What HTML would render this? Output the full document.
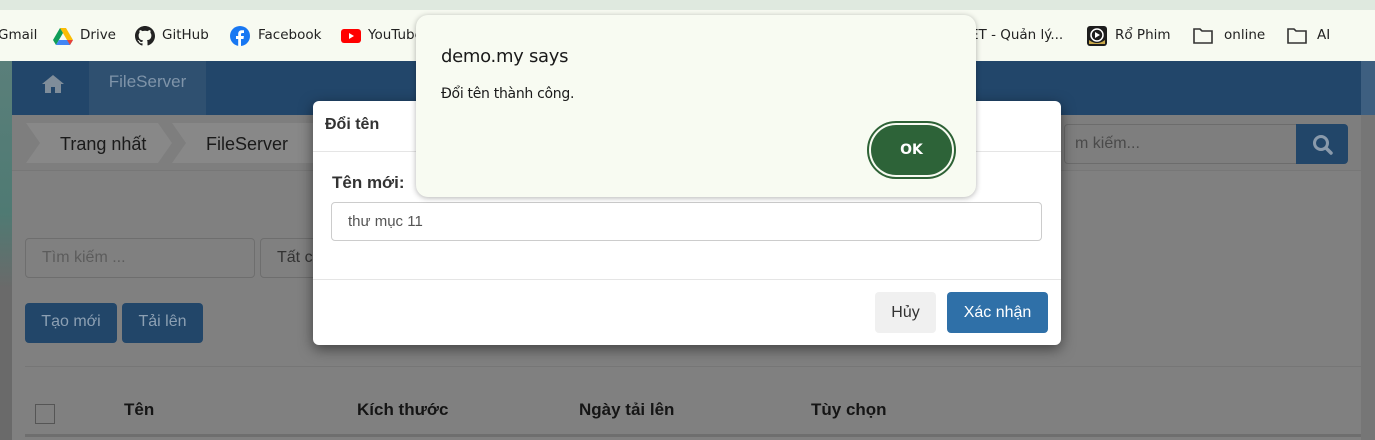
<!DOCTYPE html>
<html><head><meta charset="utf-8"><style>
*{box-sizing:border-box;margin:0;padding:0}
body{width:1375px;height:440px;overflow:hidden;position:relative;font-family:"Liberation Sans",sans-serif;background:#808080}
.abs{position:absolute}
.top{left:0;top:0;width:1375px;height:10px;background:#dfe9df}
.bm{left:0;top:10px;width:1375px;height:51px;background:#f7faf1;font-family:"DejaVu Sans","Liberation Sans",sans-serif;font-size:13.5px;color:#222}
.bm span{position:absolute;top:17px;white-space:nowrap}
.left{left:0;top:61px;width:12px;height:379px;background:linear-gradient(#5a7f7a,#4f7a73 40%,#6a6a6a 60%,#6a6a6a)}
.right{left:1361px;top:61px;width:14px;height:379px;background:#767676}
.nav{left:12px;top:61px;width:1349px;height:54px;background:#22466a}
.crumb{left:12px;top:115px;width:1349px;height:56px;background:#7e7e7e;border-bottom:1px solid #777}
.btn{background:#224669;color:#8da0b3;font-size:16px;border-radius:4px;text-align:center;line-height:38px}
.inp{border:1px solid #6e6e6e;border-radius:4px;color:#5c5c5c;font-size:16px;line-height:38px;padding-left:16px}
.th{top:400px;font-weight:bold;font-size:17px;color:#151515}
</style></head><body>
<div class="abs top"></div>
<div class="abs bm">
<span style="left:-2px">Gmail</span>
<svg class="abs" style="left:53px;top:17px" width="20" height="18" viewBox="0 0 20 18"><path d="M7 1h6l7 12h-6z" fill="#fbbc04"/><path d="M7 1L0 13l3 5 7-12z" fill="#0f9d58"/><path d="M3 18h14l3-5H6z" fill="#4285f4"/><path d="M14 13l6 0-3 5z" fill="#ea4335"/></svg>
<span style="left:80px">Drive</span>
<svg class="abs" style="left:135px;top:16px" width="20" height="20" viewBox="0 0 16 16"><path fill="#222" d="M8 0C3.6 0 0 3.6 0 8c0 3.5 2.3 6.5 5.5 7.6.4.1.5-.2.5-.4v-1.4c-2.2.5-2.7-1-2.7-1-.4-.9-.9-1.2-.9-1.2-.7-.5.1-.5.1-.5.8.1 1.200.8 1.2.8.7 1.3 1.9.9 2.3.7.1-.5.3-.9.5-1.1-1.8-.2-3.6-.9-3.6-4 0-.9.3-1.6.8-2.1-.1-.2-.4-1 .1-2.1 0 0 .7-.2 2.2.8.6-.2 1.3-.3 2-.3s1.4.1 2 .3c1.5-1 2.2-.8 2.2-.8.4 1.1.2 1.9.1 2.100.5.6.8 1.3.8 2.1 0 3.1-1.9 3.7-3.6 3.9.3.3.5.8.5 1.5v2.2c0 .2.1.5.6.4C13.7 14.5 16 11.5 16 8c0-4.4-3.6-8-8-8z"/></svg>
<span style="left:162px">GitHub</span>
<svg class="abs" style="left:230px;top:16px" width="20" height="20" viewBox="0 0 20 20"><circle cx="10" cy="10" r="10" fill="#1877f2"/><path d="M11 20v-7h2.5l.4-3H11V8.300c0-.8.3-1.300 1.4-1.300H14V4.300c-.3 0-1.2-.1-2.200-.1-2.200 0-3.600 1.300-3.600 3.700V10H6v3h2.200v7z" fill="#fff"/></svg>
<span style="left:258px">Facebook</span>
<svg class="abs" style="left:341px;top:19px" width="20" height="14" viewBox="0 0 20 14"><rect width="20" height="14" rx="3" fill="#f00"/><path d="M8 4l5 3-5 3z" fill="#fff"/></svg>
<span style="left:368px">YouTube</span>
<span style="left:970px">ET - Quản lý...</span>
<svg class="abs" style="left:1087px;top:16px" width="20" height="20" viewBox="0 0 20 20"><rect width="20" height="20" rx="3" fill="#1d1d1d"/><circle cx="10" cy="9" r="6" fill="none" stroke="#fff" stroke-width="1.5"/><path d="M8 6l5 3-5 3z" fill="#fff"/><path d="M2 14q8 6 16 0v4H2z" fill="#c9a84a"/></svg>
<span style="left:1115px">Rổ Phim</span>
<svg class="abs" style="left:1193px;top:18px" width="20" height="16" viewBox="0 0 20 16"><path d="M1 1h6l2 2h10v12H1z" fill="none" stroke="#333" stroke-width="1.6"/></svg>
<span style="left:1224px">online</span>
<svg class="abs" style="left:1287px;top:18px" width="20" height="16" viewBox="0 0 20 16"><path d="M1 1h6l2 2h10v12H1z" fill="none" stroke="#333" stroke-width="1.6"/></svg>
<span style="left:1317px">AI</span>
</div>
<div class="abs left"></div>
<div class="abs right"><div style="height:54px;background:#3e5f80"></div></div>
<div class="abs nav">
<svg class="abs" style="left:30px;top:13px" width="22" height="20" viewBox="0 0 22 20"><path d="M11 1L0 10h3v9h6v-6h4v6h6v-9h3z" fill="#7f8d9a"/></svg>
<div class="abs" style="left:77px;top:0;width:117px;height:54px;background:#2f5070;color:#7f94a9;font-size:17px;line-height:42px;text-align:center">FileServer</div>
</div>
<div class="abs crumb">
<svg class="abs" style="left:14px;top:8px" width="300" height="40"><path d="M0 0h132l14 20-14 20H0l14-20z" fill="#888"/><path d="M146 0h150l14 20-14 20H146l14-20z" fill="#888"/></svg>
<div class="abs" style="left:48px;top:19px;font-size:18px;color:#1a1a1a">Trang nhất</div>
<div class="abs" style="left:194px;top:19px;font-size:18px;color:#1a1a1a">FileServer</div>
<div class="abs" style="left:1052px;top:9px;width:232px;height:40px;border:1px solid #6c6c6c;border-right:0;border-radius:4px 0 0 4px;color:#4a4a4a;font-size:16px;line-height:38px;padding-left:10px">m kiếm...</div>
<div class="abs" style="left:1284px;top:9px;width:52px;height:40px;background:#224669;border-radius:0 4px 4px 0"><svg style="margin:10px 0 0 16px" width="22" height="22" viewBox="0 0 22 22"><circle cx="9" cy="9" r="6.5" fill="none" stroke="#8a9aab" stroke-width="3"/><path d="M14 14l5 5" stroke="#8a9aab" stroke-width="3.5" stroke-linecap="round"/></svg></div>
</div>
<div class="abs inp" style="left:25px;top:238px;width:230px;height:40px">Tìm kiếm ...</div>
<div class="abs inp" style="left:260px;top:238px;width:80px;height:40px;color:#333">Tất c</div>
<div class="abs btn" style="left:25px;top:303px;width:92px;height:40px">Tạo mới</div>
<div class="abs btn" style="left:122px;top:303px;width:81px;height:40px">Tải lên</div>
<div class="abs" style="left:25px;top:366px;width:1336px;height:1px;background:#767676"></div>
<div class="abs" style="left:35px;top:404px;width:20px;height:20px;border:1px solid #555"></div>
<div class="abs th" style="left:124px">Tên</div>
<div class="abs th" style="left:357px">Kích thước</div>
<div class="abs th" style="left:579px">Ngày tải lên</div>
<div class="abs th" style="left:811px">Tùy chọn</div>
<div class="abs" style="left:25px;top:434px;width:1336px;height:3px;background:#6e6e6e"></div>

<div class="abs" style="left:313px;top:101px;width:748px;height:244px;background:#fff;border-radius:6px;box-shadow:0 4px 14px rgba(0,0,0,.5)">
<div class="abs" style="left:12px;top:15px;font-weight:bold;font-size:16px;color:#333">Đổi tên</div>
<div class="abs" style="left:0;top:50px;width:748px;height:1px;background:#e5e5e5"></div>
<div class="abs" style="left:19px;top:72px;font-weight:bold;font-size:17px;color:#333">Tên mới:</div>
<div class="abs" style="left:18px;top:101px;width:711px;height:39px;border:1px solid #ccc;border-radius:4px;font-size:15px;color:#555;line-height:37px;padding-left:16px">thư mục 11</div>
<div class="abs" style="left:0;top:178px;width:748px;height:1px;background:#e5e5e5"></div>
<div class="abs" style="left:562px;top:191px;width:61px;height:41px;background:#f0f0f0;border-radius:4px;font-size:16px;color:#333;text-align:center;line-height:41px">Hủy</div>
<div class="abs" style="left:634px;top:191px;width:101px;height:41px;background:#2f70a8;border-radius:4px;font-size:16px;color:#fff;text-align:center;line-height:41px">Xác nhận</div>
</div>

<div class="abs" style="left:416px;top:15px;width:560px;height:182px;background:#f8fbf2;border-radius:12px;box-shadow:0 1px 6px rgba(0,0,0,.3);font-family:'DejaVu Sans','Liberation Sans',sans-serif">
<div class="abs" style="left:25px;top:31px;font-size:18px;color:#1a1a1a;letter-spacing:-0.3px">demo.my says</div>
<div class="abs" style="left:25px;top:71px;font-size:14px;color:#1a1a1a;letter-spacing:-0.3px">Đổi tên thành công.</div>
<div class="abs" style="left:451px;top:106px;width:89px;height:58px;border:2px solid #2e6236;border-radius:29px;padding:2px"><div style="width:100%;height:100%;background:#2d6338;border-radius:26px;color:#fff;font-weight:bold;font-size:14px;text-align:center;line-height:50px">OK</div></div>
</div>
</body></html>
